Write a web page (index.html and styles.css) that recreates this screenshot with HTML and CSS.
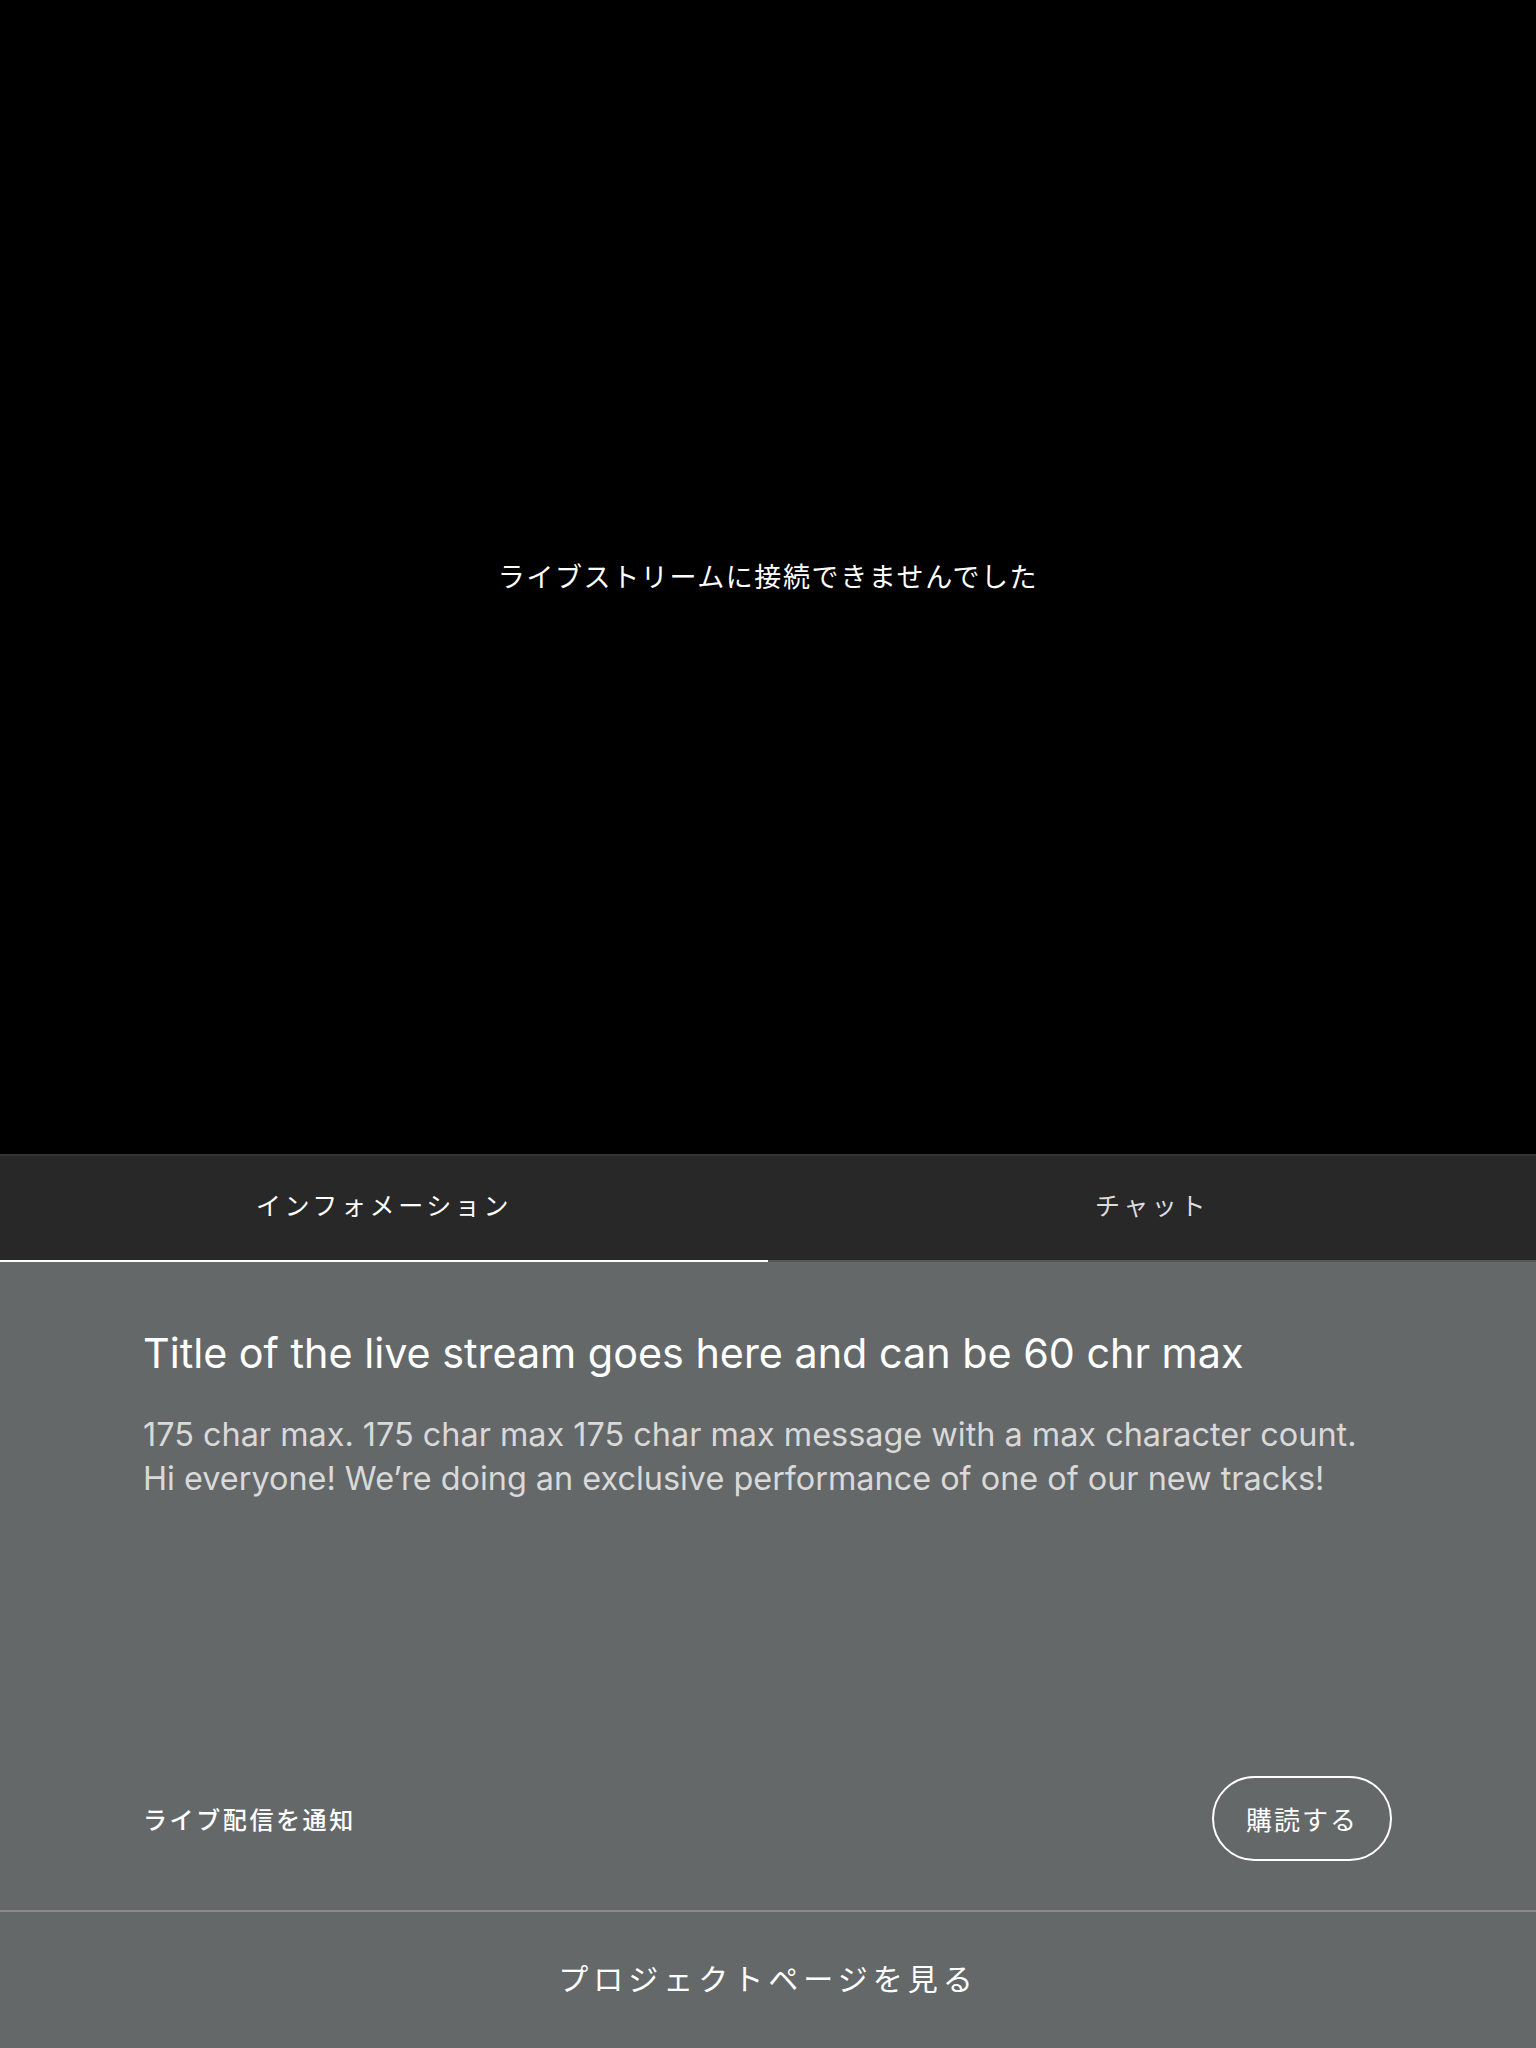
FILE: index.html
```html
<!DOCTYPE html>
<html lang="ja">
<head>
<meta charset="utf-8">
<title>Live stream</title>
<link rel="stylesheet" href="styles.css">
</head>
<body>
<div class="page">
  <section class="video">
    <p class="video-msg">ライブストリームに接続できませんでした</p>
  </section>
  <nav class="tabs">
    <div class="tab tab-active">インフォメーション</div>
    <div class="tab">チャット</div>
  </nav>
  <section class="info">
    <div class="info-text">
      <h1 class="title">Title of the live stream goes here and can be 60 chr max</h1>
      <p class="desc">175 char max. 175 char max 175 char max message with a max character count.<br>Hi everyone! We’re doing an exclusive performance of one of our new tracks!</p>
    </div>
    <div class="notify">
      <span class="notify-label">ライブ配信を通知</span>
      <button class="subscribe">購読する</button>
    </div>
  </section>
  <footer class="footer">
    <span class="footer-link">プロジェクトページを見る</span>
  </footer>
</div>
</body>
</html>
```

FILE: styles.css
```css
html, body {
  margin: 0;
  padding: 0;
  background: #646869;
}
body {
  font-family: "Inter", "Noto Sans CJK JP", sans-serif;
  color: #fff;
}
.page {
  width: 1536px;
  height: 2048px;
  display: flex;
  flex-direction: column;
  overflow: hidden;
}
.video-msg, .tab, .notify-label, .subscribe, .footer-link {
  font-family: "Noto Sans CJK JP", sans-serif;
}
.video {
  height: 1154px;
  flex: none;
  background: #000;
  display: flex;
  align-items: center;
  justify-content: center;
}
.video-msg {
  margin: 0;
  font-size: 27px;
  letter-spacing: 1.6px;
  color: #fff;
  transform: translateY(-2px);
}
.tabs {
  height: 106px;
  flex: none;
  display: flex;
  background: #282828;
  border-top: 2px solid #333;
}
.tab {
  flex: 1;
  display: flex;
  align-items: center;
  justify-content: center;
  padding-bottom: 8px;
  font-size: 25px;
  letter-spacing: 3.6px;
  color: #dcdcdc;
  border-bottom: 2px solid #555;
}
.tab-active {
  color: #fff;
  border-bottom-color: #fff;
}
.info {
  height: 648px;
  flex: none;
  box-sizing: border-box;
  background: #646869;
  padding: 67px 144px 49px 143px;
  display: flex;
  flex-direction: column;
  justify-content: space-between;
}
.title {
  margin: 0;
  font-size: 41.3px;
  line-height: 48px;
  font-weight: 400;
  color: #fff;
}
.desc {
  margin: 36px 0 0;
  font-size: 32.4px;
  line-height: 44px;
  color: #d9d9d9;
}
.notify {
  display: flex;
  align-items: center;
  justify-content: space-between;
}
.notify-label {
  font-size: 24px;
  letter-spacing: 2.6px;
  font-weight: 500;
  color: #fff;
}
.subscribe {
  width: 180px;
  height: 85px;
  border: 2px solid #fff;
  border-radius: 43px;
  background: transparent;
  color: #fff;
  font-size: 26px;
  letter-spacing: 2px;
  padding: 0;
  cursor: pointer;
}
.footer {
  flex: 1;
  box-sizing: border-box;
  padding-bottom: 6px;
  background: #646869;
  border-top: 2px solid #888a8b;
  display: flex;
  align-items: center;
  justify-content: center;
}
.footer-link {
  font-size: 30px;
  letter-spacing: 5px;
  color: #fff;
}
```
